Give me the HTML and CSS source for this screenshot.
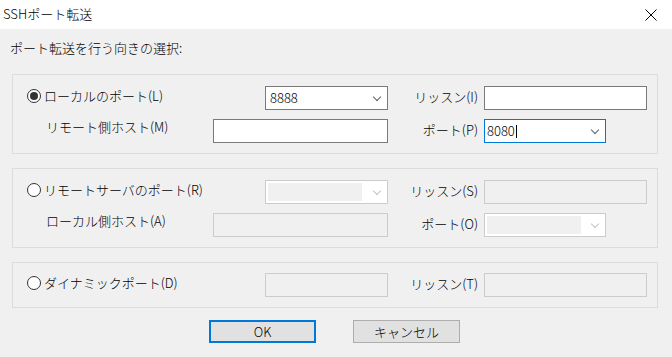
FILE: index.html
```html
<!DOCTYPE html>
<html lang="ja">
<head>
  <meta charset="UTF-8">
  <meta name="viewport" content="width=device-width, initial-scale=1.0">
  <title>SSHポート転送</title>
  <link rel="stylesheet" href="styles.css">
</head>
<body>
  <div class="titlebar">
    <span class="title">SSHポート転送</span>
    <svg class="close" width="12" height="12" viewBox="0 0 12 12">
      <path d="M0.5 0.5 L11.5 11.5 M11.5 0.5 L0.5 11.5" stroke="#000" stroke-width="1" fill="none"/>
    </svg>
  </div>

  <div class="dialog">
    <p class="prompt">ポート転送を行う向きの選択:</p>

    <div class="group">
      <label class="choice"><span class="radio checked"></span>ローカルのポート(L)</label>
      <div class="combo short"><span class="value">8888</span><span class="chev"></span></div>
      <span class="lbl">リッスン(I)</span>
      <div class="field wide"></div>

      <span class="sub">リモート側ホスト(M)</span>
      <div class="field full"></div>
      <span class="lbl">ポート(P)</span>
      <div class="combo port focus"><span class="value">8080</span><span class="caret"></span><span class="chev"></span></div>
    </div>

    <div class="group">
      <label class="choice"><span class="radio"></span>リモートサーバのポート(R)</label>
      <div class="combo short off"><span class="value"></span><span class="chev"></span></div>
      <span class="lbl">リッスン(S)</span>
      <div class="field wide off"></div>

      <span class="sub">ローカル側ホスト(A)</span>
      <div class="field full off"></div>
      <span class="lbl">ポート(O)</span>
      <div class="combo port off"><span class="value"></span><span class="chev"></span></div>
    </div>

    <div class="group single">
      <label class="choice"><span class="radio"></span>ダイナミックポート(D)</label>
      <div class="field short off"></div>
      <span class="lbl">リッスン(T)</span>
      <div class="field wide off"></div>
    </div>

    <div class="buttons">
      <button class="btn default">OK</button>
      <button class="btn">キャンセル</button>
    </div>
  </div>
</body>
</html>
```

FILE: styles.css
```css
/* Windows 風ダイアログ */
html, body {
  margin: 0;
  padding: 0;
}
body {
  width: 672px;
  height: 357px;
  overflow: hidden;
  background: #f0f0f0;
  font-family: "Noto Sans CJK JP", "Noto Sans", sans-serif;
  font-size: 13px;
  font-weight: 300;
  color: #000;
}
.titlebar {
  height: 29px;
  background: #fff;
  display: flex;
  align-items: center;
  justify-content: space-between;
  padding: 0 15px 0 3px;
}
.title {
  line-height: 16px;
  margin-top: -1px;
}
.close {
  display: block;
}
.dialog {
  padding: 11px 14px 0 12px;
}
.prompt {
  margin: 0 0 18px -2px;
  line-height: 16px;
}
.group {
  border: 1px solid #dcdcdc;
  padding: 11px 0 10px 14px;
  display: grid;
  grid-template-columns: 186px 175px 96px 164px;
  grid-auto-rows: 24px;
  row-gap: 9px;
  margin-bottom: 14px;
}
.group.single {
  padding: 10px 0 10px 14px;
  margin-bottom: 12px;
}
.choice {
  display: flex;
  align-items: center;
  gap: 3px;
  line-height: 16px;
  margin-top: -4px;
  white-space: nowrap;
}
.sub {
  padding-left: 19px;
  line-height: 16px;
  white-space: nowrap;
}
.lbl {
  text-align: right;
  padding-right: 6px;
  line-height: 16px;
  padding-top: 3px;
  white-space: nowrap;
}
.radio {
  width: 12px;
  height: 12px;
  border: 1px solid #333;
  border-radius: 50%;
  background: #fff;
  position: relative;
  flex: none;
}
.radio.checked::after {
  content: "";
  position: absolute;
  left: 2px;
  top: 2px;
  width: 8px;
  height: 8px;
  border-radius: 50%;
  background: #333;
}
.field, .combo {
  box-sizing: border-box;
  height: 24px;
  border: 1px solid #7a7a7a;
  background: #fff;
}
.field.off, .combo.off {
  border-color: #cccccc;
  background: #f0f0f0;
}
.field.full { width: 175px; }
.field.wide { width: 163px; }
.field.short, .combo.short {
  width: 123px;
  justify-self: end;
}
.combo {
  display: flex;
  align-items: center;
  padding-left: 4px;
  position: relative;
}
.combo.port {
  width: 122px;
  padding-left: 2px;
}
.combo.focus {
  border-color: #0078d7;
}
.combo.off {
  background: #fff;
  padding: 2px 0 2px 2px;
}
.combo.off .value {
  align-self: stretch;
  width: 94px;
  background: #f0f0f0;
}
.value {
  line-height: 16px;
}
.caret {
  width: 1px;
  height: 13px;
  background: #000;
  margin-left: 1px;
}
.chev {
  position: absolute;
  right: 7px;
  top: 7px;
  width: 5px;
  height: 5px;
  border-right: 1px solid #606060;
  border-bottom: 1px solid #606060;
  transform: rotate(45deg);
}
.combo.off .chev {
  border-color: #c4c4c4;
}
.buttons {
  display: flex;
  gap: 37px;
  padding-left: 197px;
}
.btn {
  box-sizing: border-box;
  width: 107px;
  height: 23px;
  padding: 0;
  border: 1px solid #adadad;
  background: #e1e1e1;
  font: inherit;
  font-size: 13px;
  line-height: 16px;
  color: #000;
}
.btn.default {
  border: 2px solid #0078d7;
}
```
